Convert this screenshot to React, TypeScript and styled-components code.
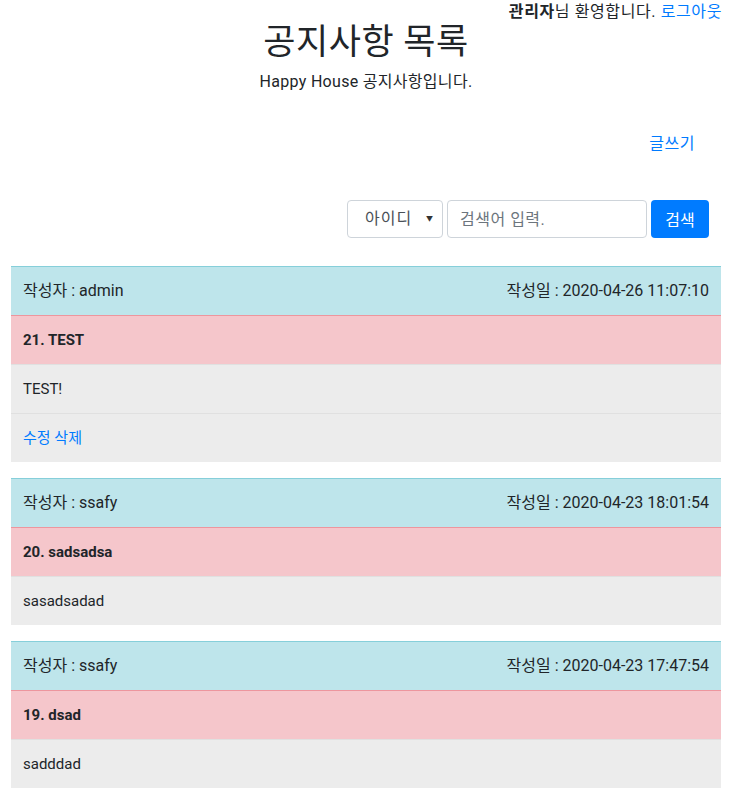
import { FC } from 'react';
import styled, { createGlobalStyle } from 'styled-components';

const GlobalStyle = createGlobalStyle`
  html, body {
    margin: 0;
    padding: 0;
    background: #fff;
  }
  body {
    font-family: "Segoe UI", Roboto, "Noto Sans CJK KR", sans-serif;
    font-size: 16px;
    line-height: 1.5;
    color: #212529;
  }
`;

const NOTICES = [
  { no: 21, title: 'TEST', writer: 'admin', date: '2020-04-26 11:07:10', content: 'TEST!', mine: true },
  { no: 20, title: 'sadsadsa', writer: 'ssafy', date: '2020-04-23 18:01:54', content: 'sasadsadad', mine: false },
  { no: 19, title: 'dsad', writer: 'ssafy', date: '2020-04-23 17:47:54', content: 'sadddad', mine: false },
];

const App: FC = () => {
  return (
    <>
      <GlobalStyle />
      <Page>
        <UserBar>
          <b>관리자</b>님 환영합니다. <Link href="#">로그아웃</Link>
        </UserBar>
        <Title>공지사항 목록</Title>
        <Subtitle>Happy House 공지사항입니다.</Subtitle>
        <WriteRow>
          <Link href="#">글쓰기</Link>
        </WriteRow>
        <SearchForm>
          <Select>
            <span>아이디</span>
            <Caret>▼</Caret>
          </Select>
          <SearchInput placeholder="검색어 입력." />
          <SearchButton>검색</SearchButton>
        </SearchForm>
        {NOTICES.map((n) => (
          <Table key={n.no}>
            <InfoRow>
              <span>작성자 : {n.writer}</span>
              <span>작성일 : {n.date}</span>
            </InfoRow>
            <TitleRow>
              {n.no}. {n.title}
            </TitleRow>
            <BodyRow>{n.content}</BodyRow>
            {n.mine && (
              <BodyRow>
                <Link href="#">수정</Link> <Link href="#">삭제</Link>
              </BodyRow>
            )}
          </Table>
        ))}
      </Page>
    </>
  );
};

export default App;

const Page = styled.div`
  padding: 0 14px 0 11px;
`;

const Link = styled.a`
  color: #007bff;
  text-decoration: none;
`;

const UserBar = styled.div`
  text-align: right;
  height: 24px;
  line-height: 24px;
  font-size: 16px;
  letter-spacing: 0.6px;
  margin-right: -1px;

  b {
    font-weight: 700;
  }
`;

const Title = styled.h2`
  margin: 0;
  text-align: center;
  font-size: 35px;
  font-weight: 400;
  line-height: 38px;
  letter-spacing: 0.5px;
`;

const Subtitle = styled.p`
  margin: 8px 0 0;
  text-align: center;
  font-size: 16px;
  line-height: 24px;
  letter-spacing: 0.3px;
`;

const WriteRow = styled.div`
  text-align: right;
  padding: 38px 26px 0 0;
  line-height: 24px;
  letter-spacing: 0.5px;
`;

const SearchForm = styled.div`
  display: flex;
  justify-content: flex-end;
  gap: 4px;
  margin-top: 44px;
  padding-right: 12px;
  margin-bottom: 28px;
`;

const Select = styled.div`
  box-sizing: border-box;
  width: 96px;
  height: 38px;
  border: 1px solid #ced4da;
  border-radius: 4px;
  display: flex;
  align-items: center;
  justify-content: space-between;
  padding: 0 8px 0 17px;
  font-size: 16px;
  letter-spacing: 1px;
  color: #495057;
`;

const Caret = styled.span`
  font-size: 7px;
  color: #333;
`;

const SearchInput = styled.input`
  box-sizing: border-box;
  width: 200px;
  height: 38px;
  border: 1px solid #ced4da;
  border-radius: 4px;
  padding: 0 12px;
  font-family: inherit;
  font-size: 16px;
  letter-spacing: 0.5px;
  color: #495057;

  &::placeholder {
    color: #6c757d;
  }
`;

const SearchButton = styled.button`
  box-sizing: border-box;
  width: 58px;
  height: 38px;
  border: none;
  border-radius: 4px;
  background: #007bff;
  color: #fff;
  font-family: inherit;
  font-size: 16px;
`;

const Table = styled.div`
  margin-bottom: 16px;
  width: 710px;
`;

const Row = styled.div`
  padding: 12px;
  line-height: 24px;
  border-top: 1px solid #dee2e6;
`;

const InfoRow = styled(Row)`
  display: flex;
  justify-content: space-between;
  background: #bee5eb;
  border-top-color: #86cfda;
`;

const TitleRow = styled(Row)`
  background: #f5c6cb;
  border-top-color: #ed969e;
  font-weight: 700;
  font-size: 15px;
`;

const BodyRow = styled(Row)`
  background: #ececec;
  border-top-color: #e0e0e0;
  font-size: 15px;
`;
